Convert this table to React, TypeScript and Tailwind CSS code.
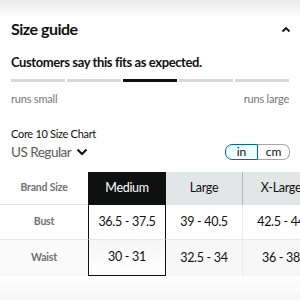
import React from 'react';

const SEGMENTS = [false, false, true, false, false];

const COLS = [
  { name: 'Medium', bust: '36.5 - 37.5', waist: '30 - 31', active: true },
  { name: 'Large', bust: '39 - 40.5', waist: '32.5 - 34', active: false },
  { name: 'X-Large', bust: '42.5 - 44', waist: '36 - 38', active: false },
];

export default function App() {
  return (
    <div className="w-[300px] h-[300px] overflow-hidden bg-white text-[#0f1111]" style={{ fontFamily: 'Lato, "Noto Sans", Arial, sans-serif' }}>
      <div className="h-[17px] bg-gradient-to-b from-[#e9e9e9] to-white" />

      {/* header */}
      <div className="h-[24px] pl-[11px] pr-[9px] flex items-center justify-between">
        <h1 className="text-[16px] font-bold leading-none tracking-[-0.5px]">Size guide</h1>
        <svg width="10" height="7" viewBox="0 0 10 7">
          <polyline points="1.5,5.5 5,2 8.5,5.5" fill="none" stroke="#0f1111" strokeWidth="1.8" />
        </svg>
      </div>

      <p className="mt-[12px] h-[18px] px-[11px] text-[13px] font-bold leading-[18px] tracking-[-0.4px]">
        Customers say this fits as expected.
      </p>

      {/* fit bar */}
      <div className="mt-[8px] px-[11px] flex gap-[2px]">
        {SEGMENTS.map((on, i) => (
          <div key={i} className={`flex-1 h-[3px] ${on ? 'bg-[#0f1111]' : 'bg-[#d5d9d9]'}`} />
        ))}
      </div>

      <div className="mt-[10px] px-[11px] flex justify-between text-[11px] leading-[14px] tracking-[-0.2px] text-[#767676]">
        <span>runs small</span>
        <span>runs large</span>
      </div>

      <p className="mt-[21px] px-[11px] text-[11px] leading-[14px] tracking-[-0.3px]">Core 10 Size Chart</p>

      <div className="mt-[2px] pl-[11px] pr-[10px] flex items-center justify-between h-[18px]">
        <div className="flex items-center gap-[5px] text-[13.5px] tracking-[-0.5px] text-[#565959]">
          <span>US Regular</span>
          <svg width="12" height="8" viewBox="0 0 12 8">
            <polyline points="1.5,1.5 6,6 10.5,1.5" fill="none" stroke="#0f1111" strokeWidth="2" />
          </svg>
        </div>
        <div className="flex h-[16px] text-[12px] leading-none">
          <div className="w-[33px] flex items-center justify-center bg-[#edfdff] border border-[#007185] rounded-l-[7px]">in</div>
          <div className="w-[32px] flex items-center justify-center border border-l-0 border-[#a6a6a6] rounded-r-[7px]">cm</div>
        </div>
      </div>

      {/* table */}
      <div className="mt-[11px] flex">
        <div className="w-[88px] shrink-0 flex flex-col text-[10.5px] font-bold tracking-[-0.2px] text-[#6f7373]">
          <div className="h-[33px] flex items-center justify-center border-b border-[#e7e7e7]">Brand Size</div>
          <div className="h-[35px] flex items-center justify-center border-b border-[#e7e7e7]">Bust</div>
          <div className="h-[36px] flex items-center justify-center bg-[#fafafa]">Waist</div>
        </div>
        {COLS.map(c => (
          <div key={c.name} className={`shrink-0 flex flex-col text-[12.5px] tracking-[-0.3px] ${c.active ? 'w-[78px]' : 'w-[77px] border-r border-[#ececec]'}`}>
            <div className={`h-[33px] flex items-center justify-center ${c.active ? 'bg-[#0f1111] text-white' : 'bg-[#e3e6e6] border-r border-[#b5b5b5] -mr-px'}`}>{c.name}</div>
            <div className={`h-[35px] flex items-center justify-center bg-white border-b ${c.active ? 'border-x border-x-[#0f1111] border-b-[#e7e7e7]' : 'border-[#e7e7e7]'}`}>{c.bust}</div>
            <div className={`h-[36px] flex items-center justify-center ${c.active ? 'border border-t-0 border-[#0f1111] bg-gradient-to-b from-[#f5f5f5] to-white' : 'bg-[#f7f7f7]'}`}>{c.waist}</div>
          </div>
        ))}
      </div>
      <div className="h-[24px] bg-gradient-to-b from-white to-[#f7f7f7]" />
    </div>
  );
}
